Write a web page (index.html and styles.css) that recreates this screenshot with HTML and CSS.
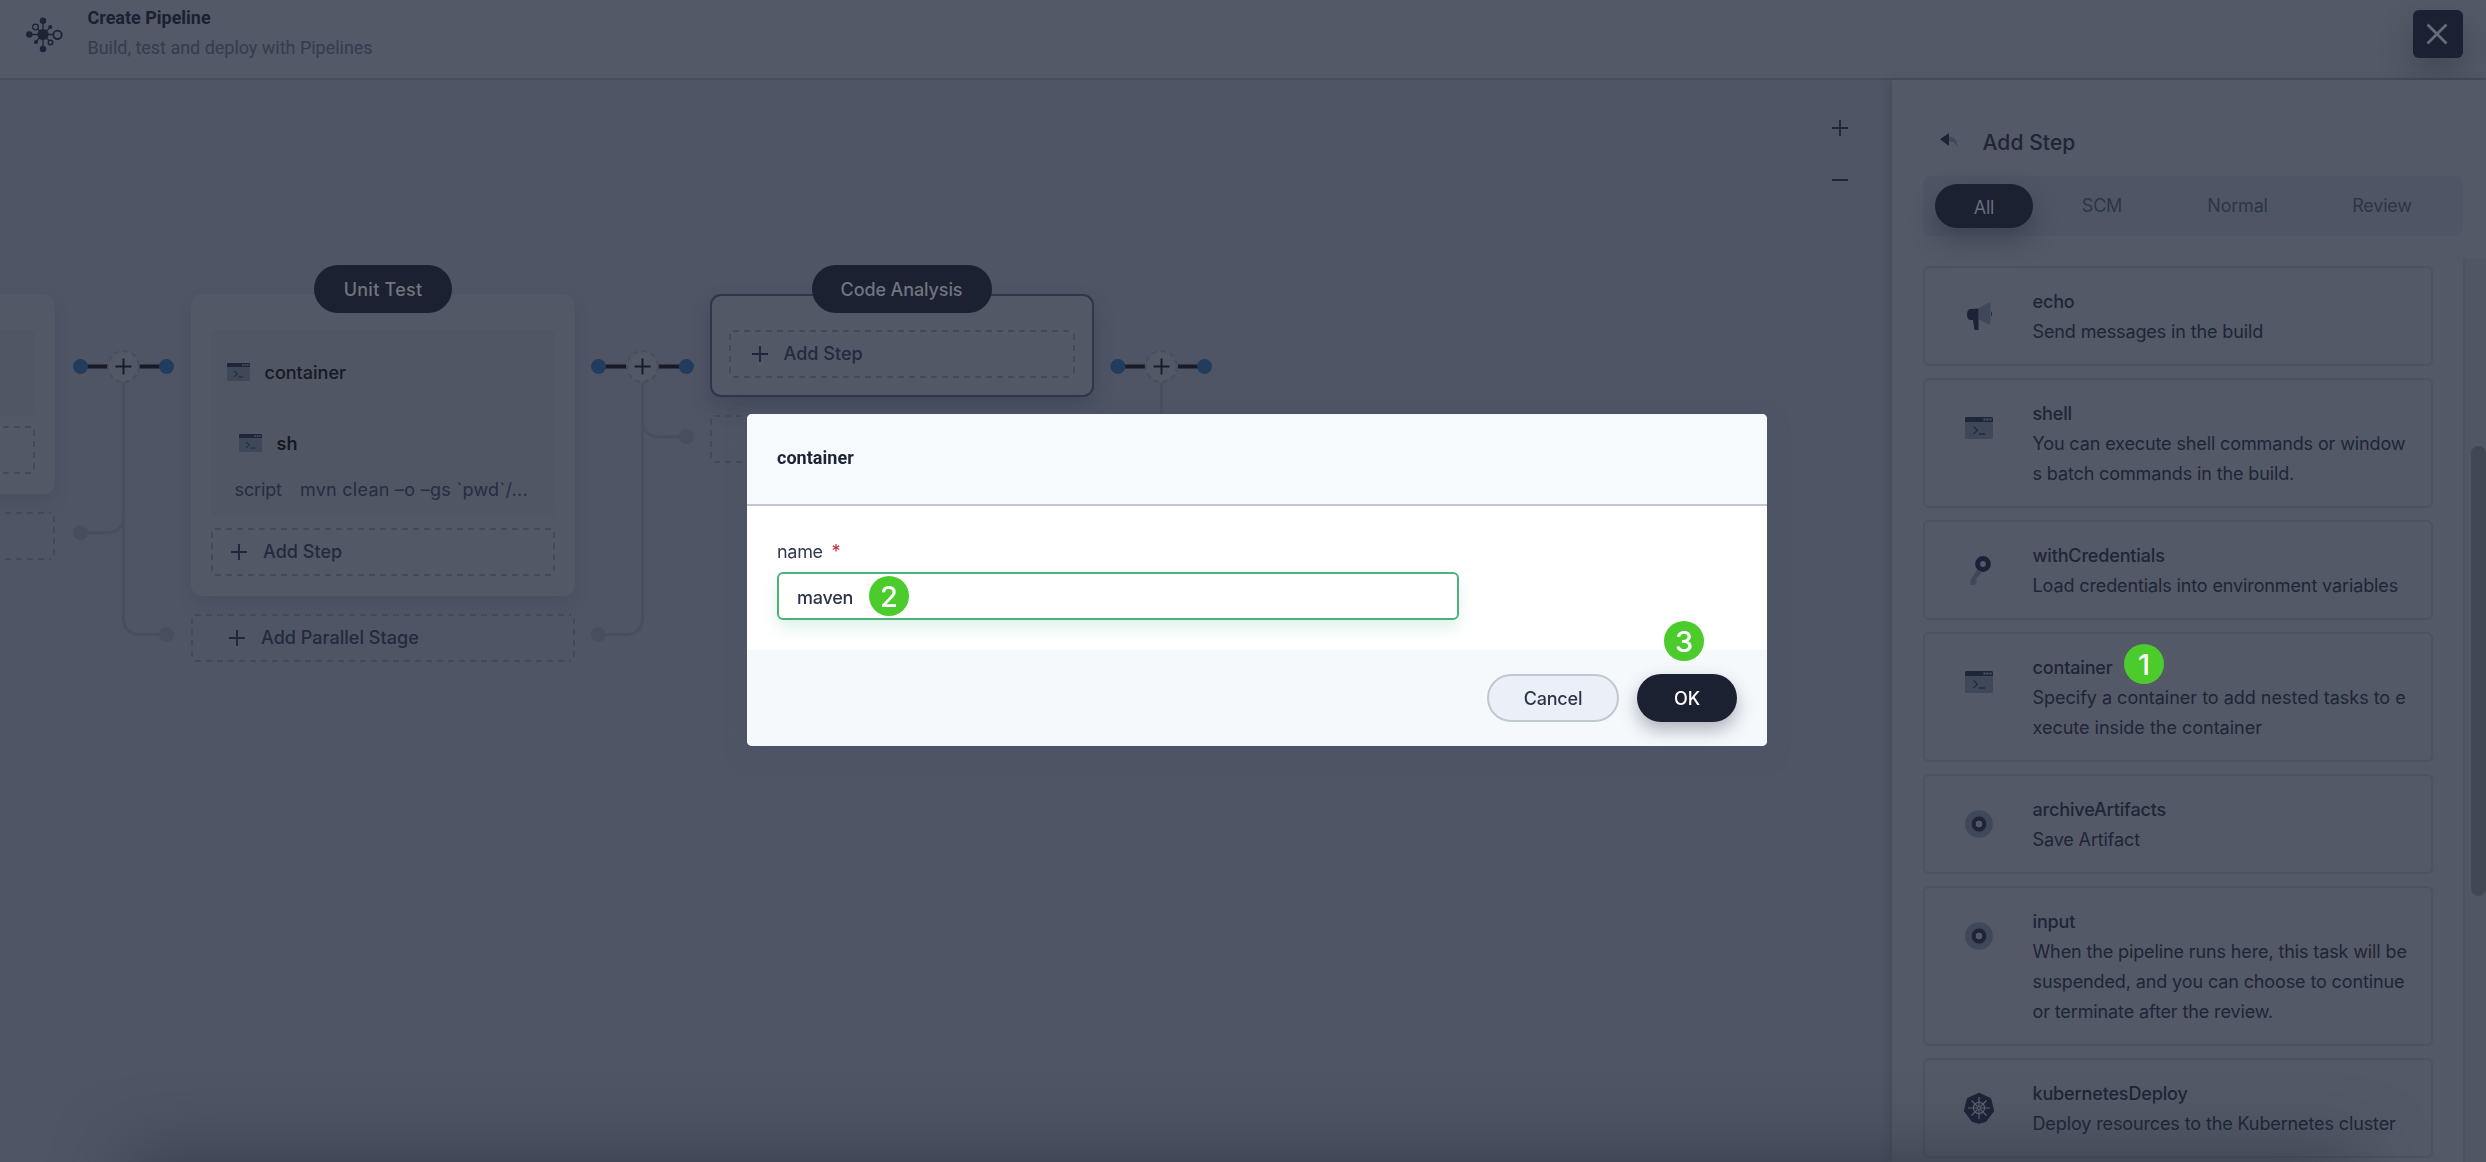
FILE: index.html
```
<!DOCTYPE html>
<html lang="en">
<head>
<meta charset="utf-8">
<title>Create Pipeline</title>
<link rel="stylesheet" href="styles.css">
</head>
<body>
<svg class="defs" aria-hidden="true">
  <symbol id="terminal" viewBox="0 0 28 22">
    <rect width="28" height="22" rx="1.5" fill="#3f4859"/>
    <path d="M0 5V1.500A1.500 1.500 0 0 1 1.500 0h25A1.500 1.500 0 0 1 28 1.500V5z" fill="#1f2637"/>
    <path d="M18.500 1.500h2v2h-2zM21.500 1.500h2v2h-2zM24.500 1.500h2v2h-2z" fill="#4d5768"/>
    <path d="M8.500 9.500l4 3.700-4 3.700M14 17h6" fill="none" stroke="#222a3b" stroke-width="1.300"/>
  </symbol>
  <symbol id="plus" viewBox="0 0 16 16">
    <path d="M8 0v16M0 8h16" stroke="currentColor" stroke-width="1.900"/>
  </symbol>
  <symbol id="ring" viewBox="0 0 28 28">
    <circle cx="14" cy="14" r="13.800" fill="#3f485a"/>
    <circle cx="14" cy="14" r="5.300" fill="none" stroke="#1c2436" stroke-width="4.200"/>
    <circle cx="14" cy="14" r="3.200" fill="#535a67"/>
  </symbol>
</svg>

<div class="app">
  <header class="topbar">
    <svg class="topbar-icon" viewBox="0 0 38 36" fill="#1d2438" stroke="#1d2438">
      <path d="M17 3v30M3 17.500h26M9.500 10l15 15M24.500 10l-15 15" fill="none" stroke-width="1.300"/>
      <circle cx="17" cy="17.500" r="5.600" stroke="none"/>
      <circle cx="17" cy="3.800" r="3.200" stroke="none"/>
      <circle cx="17" cy="32" r="3.200" stroke="none"/>
      <circle cx="3.300" cy="17.500" r="3.200" stroke="none"/>
      <circle cx="24.300" cy="10" r="2" stroke="none"/>
      <circle cx="10" cy="25" r="2" stroke="none"/>
      <circle cx="9.500" cy="10" r="2.800" fill="#535a67" stroke-width="1.300"/>
      <circle cx="24.500" cy="25.500" r="2.200" fill="#535a67" stroke-width="1.500"/>
      <circle cx="31.500" cy="17.800" r="4.200" fill="#535a67" stroke-width="1.900"/>
    </svg>
    <div class="topbar-text">
      <div class="topbar-title">Create Pipeline</div>
      <div class="topbar-desc">Build, test and deploy with Pipelines</div>
    </div>
    <button class="close" aria-label="Close">
      <svg width="20" height="20" viewBox="0 0 20 20"><path d="M.500.500l19 19M19.500.500l-19 19" stroke="#656b78" stroke-width="2.800"/></svg>
    </button>
  </header>

  <main class="workspace">
    <section class="canvas">
      <svg class="links" width="1240" height="600" viewBox="0 80 1240 600" fill="none">
        <g stroke="#484e5d" stroke-width="3">
          <path d="M123.500 383V617q0 17.500 17 17.500h26M123.500 515q0 17.700-17 17.700h-26"/>
          <path d="M642.500 383V617q0 17.500-17 17.500h-26M642.500 419q0 17.700 17 17.700h26"/>
          <path d="M1161.500 383V419q0 17.700-17 17.700h-26"/>
        </g>
        <g fill="#484e5d">
          <circle cx="80.500" cy="532.700" r="7.500"/><circle cx="166.500" cy="634.500" r="7.500"/>
          <circle cx="598.500" cy="634.500" r="7.500"/><circle cx="686.500" cy="436.700" r="7.500"/>
        </g>
        <g stroke="#181a26" stroke-width="4">
          <path d="M80 366.500h28M139.500 366.500h27M598 366.500h28M658.500 366.500h27M1117 366.500h28M1178 366.500h27"/>
        </g>
        <g fill="#213c5d">
          <circle cx="80.500" cy="366.500" r="7.500"/><circle cx="166.500" cy="366.500" r="7.500"/>
          <circle cx="598.500" cy="366.500" r="7.500"/><circle cx="686.300" cy="366.500" r="7.500"/>
          <circle cx="1118" cy="366.500" r="7.500"/><circle cx="1204.500" cy="366.500" r="7.500"/>
        </g>
        <g fill="#525865" stroke="#474d5b" stroke-width="2" stroke-dasharray="5 4">
          <circle cx="123.500" cy="366.500" r="15.500"/><circle cx="642.500" cy="366.500" r="15.500"/><circle cx="1161.300" cy="366.500" r="15.500"/>
        </g>
        <path d="M123.500 358.500v16M115.500 366.500h16M642.500 358.500v16M634.500 366.500h16M1161.500 358.500v16M1153.500 366.500h16" stroke="#181c28" stroke-width="1.900"/>
      </svg>

      <div class="node node-prev">
        <div class="stage stage-prev">
          <div class="task-group"></div>
          <div class="dashed add-step"></div>
        </div>
        <div class="dashed parallel"></div>
      </div>

      <div class="node node-unit">
        <div class="pill pill-unit">Unit Test</div>
        <div class="stage stage-unit">
          <div class="task-group">
            <div class="task"><svg class="task-icon"><use href="#terminal"/></svg>container</div>
            <div class="task task-nested"><svg class="task-icon"><use href="#terminal"/></svg>sh</div>
            <div class="task-args"><span>script</span><span class="script-value">mvn clean –o –gs `pwd`/...</span></div>
          </div>
          <div class="dashed add-step"><svg class="plus"><use href="#plus"/></svg>Add Step</div>
        </div>
        <div class="dashed parallel"><svg class="plus"><use href="#plus"/></svg>Add Parallel Stage</div>
      </div>

      <div class="node node-code">
        <div class="pill pill-code">Code Analysis</div>
        <div class="stage stage-active">
          <div class="dashed add-step"><svg class="plus"><use href="#plus"/></svg>Add Step</div>
        </div>
        <div class="dashed parallel"></div>
      </div>

      <div class="zoom">
        <svg class="plus"><use href="#plus"/></svg>
        <svg width="16" height="2"><rect width="16" height="2" fill="#1d2435"/></svg>
      </div>
    </section>

    <aside class="panel">
      <div class="panel-head">
        <svg width="18" height="14" viewBox="0 0 18 14"><path d="M8 3.500c6 0 9.500 3.500 9.500 10-2-4-5-5-9.500-5z" fill="#3e4960"/><path d="M9 0v13L0 6.300z" fill="#1d2436"/></svg>
        <span>Add Step</span>
      </div>
      <div class="tabs">
        <span class="tab tab-on">All</span>
        <span class="tab">SCM</span>
        <span class="tab">Normal</span>
        <span class="tab">Review</span>
      </div>
      <div class="scroll">
        <div class="steps">
          <div class="step">
            <svg class="step-icon" viewBox="0 0 28 28">
              <path d="M13.500 6.500L23 1q2.500-.8 2.500 2v17q0 2.800-2.500 2L13.500 17z" fill="#3f485a"/>
              <path d="M13.500 6.500V28h-4L8 18H6q-4 0-4-5.500T6 7zM26 9.500q2 2.500 0 5z" fill="#1c2336"/>
            </svg>
            <div><div class="step-name">echo</div><div class="step-desc">Send messages in the build</div></div>
          </div>
          <div class="step">
            <svg class="step-icon step-icon-low"><use href="#terminal"/></svg>
            <div><div class="step-name">shell</div><div class="step-desc">You can execute shell commands or window<br>s batch commands in the build.</div></div>
          </div>
          <div class="step">
            <svg class="step-icon" viewBox="0 0 28 28">
              <path d="M12 14l4.500 3-5 5v5q-2 3-6 1.500V24z" fill="#3f485a"/>
              <circle cx="18" cy="8" r="5.400" fill="#535a67" stroke="#1c2138" stroke-width="5"/>
            </svg>
            <div><div class="step-name">withCredentials</div><div class="step-desc">Load credentials into environment variables</div></div>
          </div>
          <div class="step">
            <svg class="step-icon step-icon-low"><use href="#terminal"/></svg>
            <div><div class="step-name">container<b class="badge badge-1">1</b></div><div class="step-desc step-desc-wide">Specify a container to add nested tasks to e<br>xecute inside the container</div></div>
          </div>
          <div class="step">
            <svg class="step-icon"><use href="#ring"/></svg>
            <div><div class="step-name">archiveArtifacts</div><div class="step-desc">Save Artifact</div></div>
          </div>
          <div class="step">
            <svg class="step-icon"><use href="#ring"/></svg>
            <div><div class="step-name">input</div><div class="step-desc">When the pipeline runs here, this task will be<br>suspended, and you can choose to continue<br>or terminate after the review.</div></div>
          </div>
          <div class="step">
            <svg class="step-icon" viewBox="0 0 28 28">
              <path d="M14-.8L25.600 4.500 28.700 17 20.800 27.500 14 29.200 7.200 27.500-.7 17 2.400 4.500z" fill="#1d2338" stroke="#1d2338" stroke-linejoin="round"/>
              <g stroke="#5b6270" stroke-width="1.200" fill="none">
                <circle cx="14" cy="14" r="5.600"/><circle cx="14" cy="14" r="1.500"/>
                <path d="M14 3v9M14 16v9M3 14h9M16 14h9M6.500 6.500l6 6M15.500 15.500l6 6M21.500 6.500l-6 6M12.500 15.500l-6 6"/>
              </g>
            </svg>
            <div><div class="step-name">kubernetesDeploy</div><div class="step-desc">Deploy resources to the Kubernetes cluster</div></div>
          </div>
        </div>
        <div class="track"><div class="thumb"></div></div>
      </div>
    </aside>
  </main>
</div>

<div class="overlay">
  <div class="modal">
    <div class="modal-head">container</div>
    <div class="modal-body">
      <label class="label">name <span class="required">*</span></label>
      <div class="input">maven<b class="badge badge-2">2</b></div>
    </div>
    <div class="modal-foot">
      <button class="btn btn-cancel">Cancel</button>
      <button class="btn btn-ok">OK<b class="badge badge-3">3</b></button>
    </div>
  </div>
</div>
</body>
</html>
```
FILE: styles.css
```
* { box-sizing: border-box; }
body {
  margin: 0;
  overflow: hidden;
  font: 400 18px/30px Inter, "Liberation Sans", sans-serif;
  letter-spacing: -0.12px;
  color: #1e2537;
  background: #4f5565;
}
svg { display: block; flex: none; overflow: visible; }
button { border: 0; font: inherit; letter-spacing: inherit; }
.defs { position: absolute; width: 0; height: 0; }
.app { display: flex; flex-direction: column; width: 2486px; height: 1162px; }

/* Top bar */
.topbar {
  display: flex;
  height: 80px;
  padding: 3px 23px 0 26px;
  background: #535966;
  border-bottom: 2px solid #474d5c;
}
.topbar-icon { width: 38px; height: 36px; margin-top: 14px; }
.topbar-text { flex: 1; margin-left: 23.500px; font-family: Roboto, sans-serif; letter-spacing: -.02px; }
.topbar-title { font-weight: 700; color: #1b2133; }
.topbar-desc { color: #343c50; }
.close {
  display: flex;
  align-items: center;
  justify-content: center;
  width: 50px;
  height: 48px;
  margin-top: 7px;
  padding: 0 2px 0 0;
  border-radius: 6px;
  background: #1b2132;
  box-shadow: 0 16px 32px rgba(27, 33, 50, .3);
}

.workspace { display: flex; flex: 1; min-height: 0; }
.canvas { position: relative; flex: 1; overflow: hidden; background: #4f5565; }
.links { position: absolute; left: 0; top: 0; }

/* Pipeline nodes */
.node { position: absolute; width: 384px; }
.node-prev { left: -329px; top: 213.500px; }
.node-unit { left: 191px; top: 213.500px; }
.node-code { left: 709.500px; top: 213.500px; }
.stage {
  padding: 36px 20px 20px;
  border-radius: 11px;
  background: #525865;
  box-shadow: 0 8px 16px rgba(36, 46, 66, .13);
}
.stage-prev { height: 200px; }
.stage-prev .task-group { height: 85px; }
.stage-unit { height: 302px; }
.stage-active {
  height: 103.500px;
  padding: 34px 17px 17px;
  border: 2.500px solid #2e364d;
  box-shadow: 0 10px 20px rgba(36, 46, 66, .3);
}
.task-group { height: 187px; margin-bottom: 11px; padding: 28px 14px 0 15.500px; border-radius: 6px; background: #505663; }
.task { display: flex; align-items: center; gap: 15px; font-weight: 500; color: #151924; letter-spacing: 0; }
.task-icon { width: 23px; height: 18px; margin-top: -2px; }
.task-nested { margin: 41px 0 0 12px; font-weight: 600; }
.task-args { display: flex; gap: 18px; margin: 16px 0 0 8px; color: #252d42; }
.script-value { letter-spacing: .27px; }
.dashed {
  display: flex;
  align-items: center;
  height: 48px;
  border-radius: 5px;
  background: repeating-linear-gradient(90deg, #434958 0 6px, transparent 6px 11px) 4px 0 / calc(100% - 8px) 2px no-repeat,
    repeating-linear-gradient(90deg, #434958 0 6px, transparent 6px 11px) 4px 100% / calc(100% - 8px) 2px no-repeat,
    repeating-linear-gradient(#434958 0 6px, transparent 6px 11px) 0 4px / 2px calc(100% - 8px) no-repeat,
    repeating-linear-gradient(#434958 0 6px, transparent 6px 11px) 100% 4px / 2px calc(100% - 8px) no-repeat;
  font-weight: 500;
  letter-spacing: .03px;
  color: #222a3f;
}
.dashed .plus { margin-right: 16px; }
.add-step { padding-left: 20px; }
.stage-active .add-step { padding-left: 23px; }
.parallel { margin-top: 18px; padding-left: 38px; }
.plus { width: 16px; height: 16px; color: #1f273a; }
.pill {
  position: absolute;
  top: -28.500px;
  left: 50%;
  transform: translateX(-50%);
  height: 48px;
  border-radius: 24px;
  background: #1b2131;
  color: #70757f;
  line-height: 49px;
  text-align: center;
  font-weight: 500;
}
.pill-unit { width: 138px; letter-spacing: .25px; }
.pill-code { width: 180px; }
.zoom { position: absolute; right: 44px; top: 40px; display: flex; flex-direction: column; gap: 43px; }

/* Step library */
.panel {
  position: relative;
  display: flex;
  flex-direction: column;
  width: 594px;
  padding-top: 46px;
  background: #535966;
  box-shadow: -3px 0 8px rgba(36, 46, 66, .2);
}
.panel-head { display: flex; height: 50px; padding: 7px 0 0 48px; font-size: 21px; font-weight: 500; letter-spacing: .1px; }
.panel-head span { margin: -2px 0 0 24.500px; line-height: 24px; }
.tabs {
  display: grid;
  grid-template-columns: 98px 138px 133px 156px;
  height: 60px;
  margin: 0 23px 0 31px;
  padding: 8px 0 8px 12px;
  border-radius: 8px;
  background: #4f5564;
}
.tab { display: flex; align-items: center; justify-content: center; color: #2c3549; letter-spacing: -.2px; }
.tab-on { height: 44px; padding-top: 3px; border-radius: 22px; background: #1b2131; color: #686e7a; box-shadow: 0 12px 24px rgba(27, 33, 50, .35); }
.scroll { display: flex; flex: 1; min-height: 0; margin-top: 22px; overflow: hidden; }
.steps { display: flex; flex-direction: column; gap: 12px; width: 573px; padding: 8px 30px 0 31px; border-right: 2px solid #4c5260; }
.step { display: flex; flex: none; padding: 19px 0 17px 40px; border: 2px solid #4c5260; border-radius: 6px; }
.step-icon { width: 28px; height: 28px; margin: 15px 39.500px 0 0; }
.step-icon-low { height: 22px; margin-top: 18px; }
.step-name { position: relative; width: max-content; font-weight: 500; letter-spacing: -.15px; }
.step-desc { white-space: nowrap; }
.step-desc-wide { letter-spacing: -.01px; }
.track { flex: 1; padding: 188px 0 0 6px; background: #505663; }
.thumb { height: 450px; border-radius: 8px; background: #414753; }

/* Dialog */
.overlay {
  position: fixed;
  inset: 0;
  display: flex;
  padding: 414px 0 0 747px;
  align-items: flex-start;
}
.overlay::after {
  content: "";
  position: absolute;
  left: 150px;
  right: 150px;
  bottom: -80px;
  height: 60px;
  box-shadow: 0 -6px 70px 20px rgba(42, 47, 60, .6);
}
.modal { width: 1020px; height: 332px; border-radius: 5px; background: #fff; box-shadow: 0 8px 20px rgba(70, 86, 108, .5); }
.modal-head {
  height: 92px;
  padding: 29px 30px 0;
  border-bottom: 2px solid #c0c8d4;
  border-radius: 5px 5px 0 0;
  background: #f6fafd;
  font-family: Roboto, sans-serif;
  font-weight: 700;
  letter-spacing: .03px;
  color: #1d2336;
}
.modal-body { height: 144px; padding: 31px 30px 0; }
.label { display: block; height: 35px; letter-spacing: -.3px; color: #303950; }
.required { margin-left: 4px; color: #c62a2c; }
.input {
  position: relative;
  width: 682px;
  height: 48px;
  padding: 8px 18px;
  border: 2px solid #4eb17b;
  border-radius: 6px;
  box-shadow: 0 8px 16px rgba(85, 188, 138, .2);
  font-weight: 500;
  line-height: 31px;
  letter-spacing: -.25px;
  color: #2b344b;
}
.modal-foot {
  display: flex;
  justify-content: flex-end;
  gap: 18px;
  height: 96px;
  padding: 24px 30px;
  border-radius: 0 0 5px 5px;
  background: #f6f9fc;
}
.btn { position: relative; height: 48px; padding: 2px 0 0; border-radius: 24px; font-weight: 500; letter-spacing: -.2px; }
.btn-cancel { width: 132px; border: 2px solid #c0c8d2; background: #ebf0f8; color: #2d354b; }
.btn-ok { width: 100px; background: #1b2131; color: #fff; box-shadow: 0 8px 18px rgba(36, 46, 66, .35); }

/* Numbered callouts */
.badge {
  position: absolute;
  width: 40px;
  height: 40px;
  border-radius: 50%;
  background: #4bcc2c;
  color: #fff;
  font: 500 29px/41px Inter, sans-serif;
  text-align: center;
  letter-spacing: 0;
}
.badge-1 { left: 91.500px; top: -9px; }
.badge-2 { left: 90px; top: 2px; }
.badge-3 { left: 27px; top: -53px; }
```
